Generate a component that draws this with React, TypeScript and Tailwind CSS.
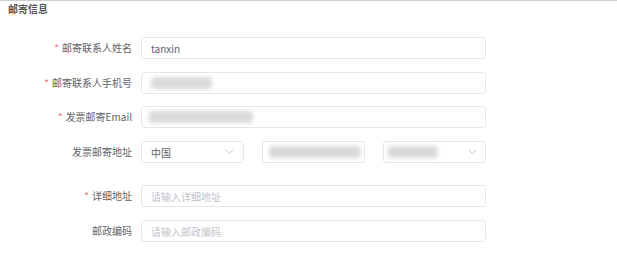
import React from "react";

const font = { fontFamily: '"Noto Sans CJK SC", "Liberation Sans", sans-serif' };

function Chevron() {
  return (
    <svg width="9" height="6" viewBox="0 0 9 6" fill="none" className="shrink-0">
      <path d="M1 1l3.5 3.5L8 1" stroke="#c0c4cc" strokeWidth="1" />
    </svg>
  );
}

function Row({
  label,
  required,
  className,
  children,
}: {
  label: string;
  required?: boolean;
  className?: string;
  children: React.ReactNode;
}) {
  return (
    <div className={`flex items-center h-[22px] ${className ?? ""}`}>
      <div className="w-[132px] flex justify-end items-center text-[10px] text-[#606266] leading-none">
        {required && <span className="text-[#f56c6c] mr-[3px]">*</span>}
        <span>{label}</span>
      </div>
      <div className="ml-[9px] w-[345px] h-full">{children}</div>
    </div>
  );
}

function Input({ children }: { children?: React.ReactNode }) {
  return (
    <div className="h-full w-full border border-[#e4e7ed] rounded-[3px] bg-white flex items-center px-[9px] text-[10px] text-[#606266] overflow-hidden">
      {children}
    </div>
  );
}

function Blur({ w }: { w: number }) {
  return <div className="h-[12px] bg-[#d9d9dc] blur-[2px] rounded-sm" style={{ width: w }} />;
}

export default function App() {
  return (
    <div className="w-[617px] h-[258px] bg-white border-t border-[#cfcfcf] relative" style={font}>
      <div className="pl-[8px] pt-[1px] text-[10px] font-bold text-[#555] leading-[14px]">邮寄信息</div>
      <div className="flex flex-col mt-[21px]">
        <Row label="邮寄联系人姓名" required>
          <Input>tanxin</Input>
        </Row>
        <Row label="邮寄联系人手机号" required className="mt-[13px]">
          <Input>
            <Blur w={61} />
          </Input>
        </Row>
        <Row label="发票邮寄Email" required className="mt-[12px]">
          <Input>
            <div className="-ml-[2px]">
              <Blur w={104} />
            </div>
          </Input>
        </Row>
        <Row label="发票邮寄地址" className="mt-[13px]">
          <div className="flex h-full gap-[18px]">
            <div className="w-[103px] h-full border border-[#e4e7ed] rounded-[3px] flex items-center justify-between pl-[9px] pr-[9px] text-[10px] text-[#606266]">
              <span>中国</span>
              <Chevron />
            </div>
            <div className="w-[103px] h-full border border-[#e4e7ed] rounded-[3px] flex items-center pl-[6px]">
              <Blur w={92} />
            </div>
            <div className="w-[103px] h-full border border-[#e4e7ed] rounded-[3px] flex items-center justify-between pl-[4px] pr-[8px]">
              <Blur w={50} />
              <Chevron />
            </div>
          </div>
        </Row>
        <Row label="详细地址" required className="mt-[22px]">
          <Input>
            <span className="text-[#c0c4cc]">请输入详细地址</span>
          </Input>
        </Row>
        <Row label="邮政编码" className="mt-[13px]">
          <Input>
            <span className="text-[#c0c4cc]">请输入邮政编码</span>
          </Input>
        </Row>
      </div>
    </div>
  );
}
